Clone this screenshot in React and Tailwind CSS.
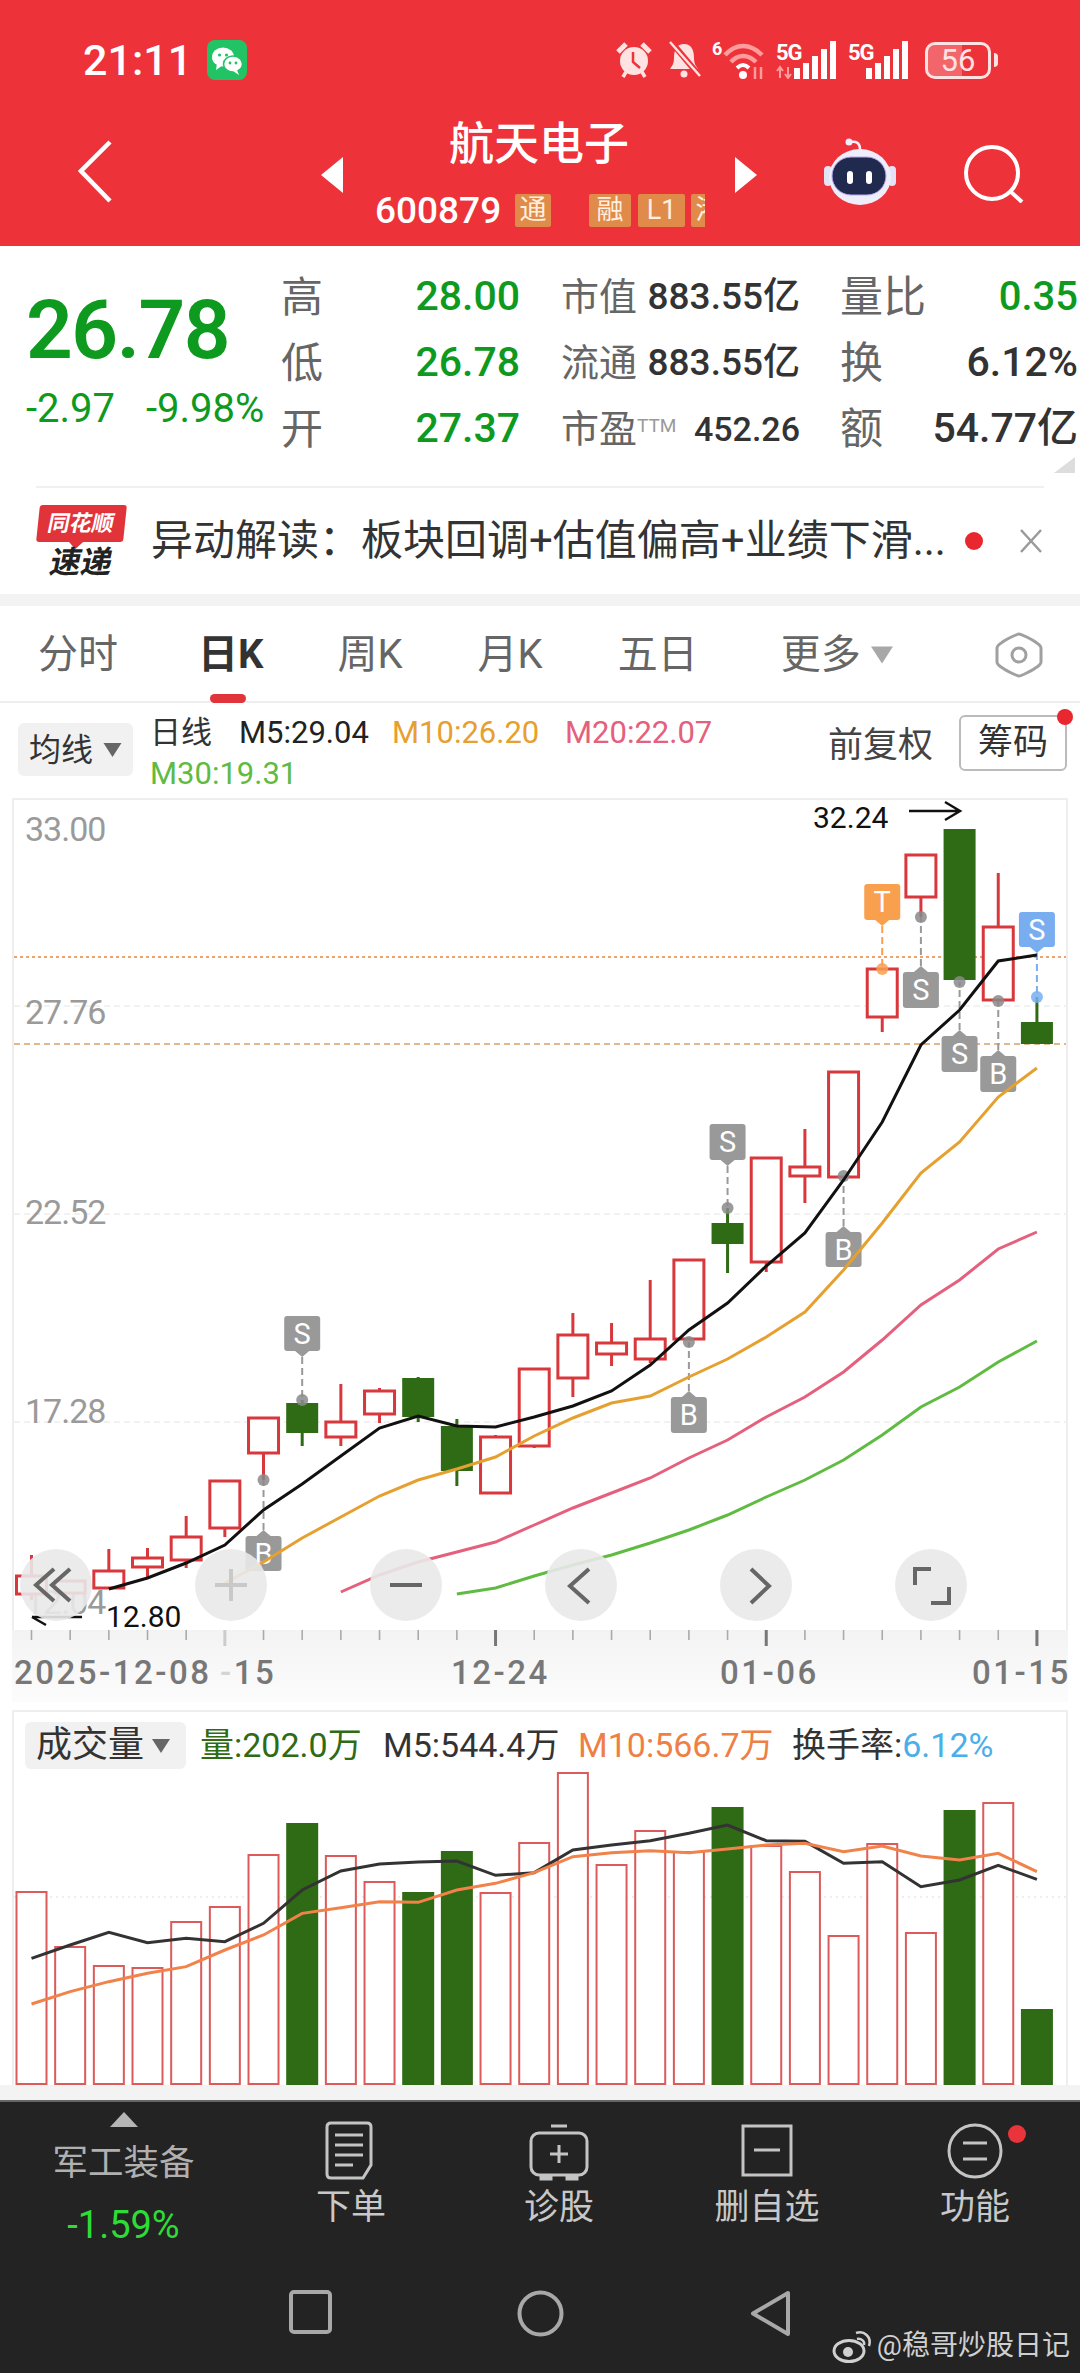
import React from "react";

const RED = "#d8383c";
const GREEN = "#2f6a14";
const cx = (i) => 31.5 + i * 38.67;

// price panel, y values are page pixels
const candles = [
  [1576, 1594, 1555, 1600, 0],
  [1581, 1593, 1581, 1593, 0],
  [1571, 1588, 1549, 1588, 0],
  [1558, 1567, 1548, 1577, 0],
  [1537, 1560, 1516, 1568, 0],
  [1481, 1528, 1481, 1537, 0],
  [1418, 1453, 1418, 1480, 0],
  [1403, 1433, 1400, 1446, 1],
  [1422, 1437, 1384, 1446, 0],
  [1391, 1414, 1388, 1423, 0],
  [1378, 1417, 1377, 1422, 1],
  [1426, 1471, 1419, 1486, 1],
  [1437, 1493, 1435, 1493, 0],
  [1369, 1446, 1369, 1448, 0],
  [1335, 1378, 1313, 1397, 0],
  [1343, 1354, 1323, 1366, 0],
  [1339, 1359, 1280, 1363, 0],
  [1260, 1339, 1260, 1339, 0],
  [1223, 1244, 1208, 1273, 1],
  [1158, 1262, 1158, 1272, 0],
  [1167, 1176, 1129, 1203, 0],
  [1072, 1177, 1072, 1177, 0],
  [969, 1017, 969, 1032, 0],
  [855, 897, 855, 917, 0],
  [829, 980, 829, 980, 1],
  [927, 1000, 873, 1000, 0],
  [1022, 1044, 997, 1044, 1],
];

const ma5 = [1589, 1578, 1563, 1545, 1510, 1484, 1456, 1428, 1416, 1426, 1427, 1417, 1406, 1391, 1365, 1330, 1303, 1266, 1233, 1180, 1122, 1045, 1010, 961, 955];
const ma10 = [1583, 1562, 1538, 1517, 1496, 1480, 1469, 1457, 1436, 1418, 1403, 1396, 1377, 1359, 1337, 1312, 1270, 1223, 1173, 1142, 1097, 1068];
const ma20 = [1592, 1575, 1562, 1552, 1542, 1525, 1508, 1493, 1478, 1458, 1440, 1417, 1397, 1372, 1340, 1305, 1280, 1249, 1232];
const ma30 = [1594, 1588, 1576, 1565, 1555, 1543, 1530, 1515, 1497, 1480, 1460, 1435, 1407, 1387, 1362, 1341];

const tags = [
  { i: 7, top: 1316, bottom: 1351, dot: 1400, label: "S", up: true, color: "#999999" },
  { i: 6, top: 1536, bottom: 1571, dot: 1480, label: "B", color: "#999999" },
  { i: 18, top: 1124, bottom: 1160, dot: 1208, label: "S", up: true, color: "#999999" },
  { i: 21, top: 1232, bottom: 1267, dot: 1176, label: "B", color: "#999999" },
  { i: 17, top: 1397, bottom: 1433, dot: 1342, label: "B", color: "#999999" },
  { i: 22, top: 884, bottom: 920, dot: 969, label: "T", up: true, color: "#f9a04f" },
  { i: 23, top: 972, bottom: 1008, dot: 917, label: "S", color: "#999999" },
  { i: 24, top: 1036, bottom: 1072, dot: 982, label: "S", color: "#999999" },
  { i: 25, top: 1056, bottom: 1092, dot: 1001, label: "B", color: "#999999" },
  { i: 26, top: 912, bottom: 947, dot: 997, label: "S", up: true, color: "#78aef0" },
];

const priceLabels = [
  ["33.00", 829],
  ["27.76", 1012],
  ["22.52", 1212],
  ["17.28", 1411],
];

// volume panel, tops in page pixels
const bars = [
  [1892, 0], [1947, 0], [1966, 0], [1968, 0], [1922, 0], [1907, 0], [1855, 0], [1823, 1], [1856, 0],
  [1882, 0], [1892, 1], [1851, 1], [1893, 0], [1843, 0], [1773, 0], [1865, 0], [1831, 0], [1852, 0],
  [1807, 1], [1846, 0], [1872, 0], [1936, 0], [1844, 0], [1933, 0], [1810, 1], [1803, 0], [2009, 1],
];
const volMa5 = [835, 795, 757, 788, 775, 785, 730, 630, 573, 552, 546, 543, 586, 578, 510, 495, 482, 460, 435, 482, 484, 550, 545, 620, 600, 556, 598];
const volMa10 = [972, 935, 905, 880, 860, 810, 765, 700, 683, 665, 667, 630, 610, 578, 530, 518, 512, 518, 507, 495, 490, 515, 498, 528, 540, 520, 575];

const pts = (arr, start) => arr.map((y, k) => `${cx(start + k)},${y}`).join(" ");
const volPts = (arr) => arr.map((z, k) => `${cx(k)},${1680 + z / 3}`).join(" ");

function Tag({ i, top, bottom, dot, label, up, color }) {
  const x = cx(i);
  const tip = up ? bottom + 6 : top - 6;
  const notch = up ? bottom : top;
  return (
    <g>
      <line x1={x} x2={x} y1={tip} y2={dot} stroke={color} strokeWidth="2" strokeDasharray="7 4" />
      <circle cx={x} cy={dot} r="6" fill={color === "#999999" ? "#8a8a8a" : color} opacity="0.85" />
      <rect x={x - 18} y={top} width="36" height={bottom - top} rx="3" fill={color} />
      <polygon points={`${x - 7},${notch} ${x + 7},${notch} ${x},${tip}`} fill={color} />
      <text x={x} y={(top + bottom) / 2 + 10} textAnchor="middle" fontSize="29" fill="#fff">
        {label}
      </text>
    </g>
  );
}

function PriceChart() {
  return (
    <div className="relative ml-[12px] h-[832px] w-[1056px] border-x-2 border-t-2 border-[#eeeeee]">
      <svg viewBox="14 800 1052 830" className="block h-[830px] w-[1052px]">
        {[1006, 1214, 1422].map((y) => (
          <line key={y} x1="14" x2="1066" y1={y} y2={y} stroke="#e4e4e4" strokeWidth="1" strokeDasharray="6 4" />
        ))}
        <line x1="14" x2="1066" y1="957" y2="957" stroke="#e8853f" strokeWidth="1.6" strokeDasharray="3 3" />
        <line x1="14" x2="1066" y1="1044" y2="1044" stroke="#d9a067" strokeWidth="1.6" strokeDasharray="6 4" />
        {priceLabels.map(([t, y]) => (
          <text key={t} x="25" y={y + 12} fontSize="34" letterSpacing="-1" fill="#9a9a9a">
            {t}
          </text>
        ))}
        <text x="25" y="1614" fontSize="34" letterSpacing="-1" fill="#9a9a9a">12.04</text>
        {candles.map(([t, b, hi, lo, down], i) => {
          const x = cx(i);
          const c = down ? GREEN : RED;
          return (
            <g key={i}>
              <line x1={x} x2={x} y1={hi} y2={t} stroke={c} strokeWidth="3" />
              <line x1={x} x2={x} y1={b} y2={lo} stroke={c} strokeWidth="3" />
              {down ? (
                <rect x={x - 16} y={t} width="32" height={b - t} fill={c} />
              ) : (
                <rect x={x - 15} y={t} width="30" height={b - t} fill="#fff" stroke={c} strokeWidth="3" />
              )}
            </g>
          );
        })}
        {tags.map((t) => (
          <Tag key={t.i} {...t} />
        ))}
        <polyline points={pts(ma30, 11)} fill="none" stroke="#5fbb42" strokeWidth="3" />
        <polyline points={pts(ma20, 8)} fill="none" stroke="#e4607c" strokeWidth="3" />
        <polyline points={pts(ma10, 5)} fill="none" stroke="#e6a030" strokeWidth="3" />
        <polyline points={pts(ma5, 2)} fill="none" stroke="#111111" strokeWidth="3" />
        <text x="813" y="828" fontSize="30" fill="#111">32.24</text>
        <path d="M909 811H959M945 802L960 811L945 820" fill="none" stroke="#111" strokeWidth="2.5" />
        <text x="106" y="1627" fontSize="30" fill="#111">12.80</text>
        <path d="M82 1617H32M46 1625L32 1617" fill="none" stroke="#111" strokeWidth="2.5" />
      </svg>

      <div className="absolute left-[6px] top-[749px] flex gap-[103px]">
        <RoundButton>
          <path d="M34 20L16 36L34 52M50 20L32 36L50 52" stroke="#666" strokeWidth="4" fill="none" />
        </RoundButton>
        <RoundButton>
          <path d="M36 20V52M20 36H52" stroke="#c9c9c9" strokeWidth="4" fill="none" />
        </RoundButton>
        <RoundButton>
          <path d="M20 36H52" stroke="#666" strokeWidth="4" fill="none" />
        </RoundButton>
        <RoundButton>
          <path d="M44 20L25 37L44 54" stroke="#666" strokeWidth="4" fill="none" />
        </RoundButton>
        <RoundButton>
          <path d="M31 20L49 37L31 54" stroke="#666" strokeWidth="4" fill="none" />
        </RoundButton>
        <RoundButton>
          <path d="M36 20H20V36M36 54H54V38" stroke="#666" strokeWidth="4" fill="none" />
        </RoundButton>
      </div>
    </div>
  );
}

function RoundButton({ children }) {
  return (
    <div className="h-[72px] w-[72px] rounded-full bg-[#e9e9e9]/90">
      <svg viewBox="0 0 72 72" className="h-[72px] w-[72px]">
        {children}
      </svg>
    </div>
  );
}

function DateAxis() {
  return (
    <div className="ml-[12px] h-[72px] w-[1056px] bg-linear-to-b from-[#f3f3f3] to-[#fcfcfc]">
      <svg viewBox="12 1630 1056 72" className="block h-[72px] w-[1056px]">
        {candles.map((_, i) => {
          const major = i === 5 || i === 12 || i === 19 || i === 26;
          return (
            <line
              key={i}
              x1={cx(i)}
              x2={cx(i)}
              y1="1630"
              y2={major ? 1646 : 1640}
              stroke={i === 5 ? "#cccccc" : major ? "#777777" : "#aaaaaa"}
              strokeWidth={major ? 3 : 1.6}
            />
          );
        })}
        <g fontSize="33" fill="#777777" letterSpacing="2.5" fontWeight="500">
          <text x="14" y="1684">2025-12-08</text>
          <text x="220" y="1684">
            <tspan fill="#d4d4d4">-</tspan>15
          </text>
          <text x="451" y="1684">12-24</text>
          <text x="720" y="1684">01-06</text>
          <text x="972" y="1684">01-15</text>
        </g>
      </svg>
    </div>
  );
}

function VolumePanel() {
  return (
    <div className="ml-[12px] mt-[8px] h-[375px] w-[1056px] border-x-2 border-t-2 border-[#eeeeee]">
      <div className="flex h-[60px] items-start pl-[11px] pt-[10px] text-[34px] leading-[47px]">
        <div className="flex h-[47px] w-[161px] items-center rounded-md bg-[#f1f1f1] pl-[11px] text-[#333]">
          <span className="text-[36px]">成交量</span>
          <Caret className="ml-[8px] h-[14px] w-[18px]" fill="#666" />
        </div>
        <span className="ml-[14px] w-[183px] text-[#2f6a14]">量:202.0万</span>
        <span className="w-[195px] text-[#333]">M5:544.4万</span>
        <span className="w-[214px] text-[#ee7f45]">M10:566.7万</span>
        <span className="text-[#333]">换手率:</span>
        <span className="text-[#4aaee8]">6.12%</span>
      </div>
      <svg viewBox="14 1772 1052 313" className="block h-[313px] w-[1052px]">
        <line x1="14" x2="1066" y1="1897" y2="1897" stroke="#dddddd" strokeWidth="1" strokeDasharray="2 4" />
        {bars.map(([top, down], i) =>
          down ? (
            <rect key={i} x={cx(i) - 16} y={top} width="32" height={2085 - top} fill={GREEN} />
          ) : (
            <rect key={i} x={cx(i) - 15} y={top} width="30" height={2084 - top} fill="#fff" stroke="#dc5a5a" strokeWidth="2" />
          ),
        )}
        <polyline points={volPts(volMa5)} fill="none" stroke="#333333" strokeWidth="3" />
        <polyline points={volPts(volMa10)} fill="none" stroke="#f0824a" strokeWidth="3" />
      </svg>
    </div>
  );
}

function Caret({ className, fill }) {
  return (
    <svg viewBox="0 0 18 14" className={className}>
      <polygon points="0,0 18,0 9,14" fill={fill} />
    </svg>
  );
}

function Signal({ arrows }) {
  return (
    <svg viewBox="0 0 61 38" className="h-[38px] w-[61px]" fill="#fff">
      <text x="0" y="19" fontSize="22" fontWeight="700" letterSpacing="-1">5G</text>
      {arrows && (
        <path d="M4 26V37M1 30L4 26L7 30M12 26V37M9 33L12 37L15 33" stroke="#ff9c9c" strokeWidth="2" fill="none" />
      )}
      <rect x="18" y="27" width="6" height="11" />
      <rect x="27" y="22" width="6" height="16" />
      <rect x="36" y="15" width="6" height="23" />
      <rect x="45" y="8" width="6" height="30" />
      <rect x="54" y="0" width="6" height="38" />
    </svg>
  );
}

function StatusBar() {
  return (
    <div className="flex h-[120px] items-center justify-between pl-[83px] pr-[82px]">
      <div className="flex items-center">
        <span className="w-[124px] text-[43px] font-medium leading-none">21:11</span>
        <div className="h-[40px] w-[40px] rounded-lg bg-[#22c365]">
          <svg viewBox="0 0 40 40" className="h-[40px] w-[40px]">
            <ellipse cx="16" cy="17" rx="11" ry="9.5" fill="#fff" />
            <polygon points="10,23 9,30 16,25" fill="#fff" />
            <ellipse cx="26" cy="24" rx="9.5" ry="8" fill="#fff" stroke="#22c365" strokeWidth="1.5" />
            <polygon points="30,30 32,35 26,31" fill="#fff" />
            <circle cx="12.5" cy="15" r="1.6" fill="#22c365" />
            <circle cx="19.5" cy="15" r="1.6" fill="#22c365" />
            <circle cx="23" cy="23" r="1.4" fill="#22c365" />
            <circle cx="29" cy="23" r="1.4" fill="#22c365" />
          </svg>
        </div>
      </div>
      <div className="flex items-center">
        <svg viewBox="0 0 36 38" className="h-[38px] w-[36px]">
          <circle cx="18" cy="20" r="14" fill="#ffe3e3" />
          <path d="M17 11V21L24 27" stroke="#ee3239" strokeWidth="2.5" fill="none" />
          <path d="M2 11L10 3M34 11L26 3" stroke="#ffe3e3" strokeWidth="5" />
          <path d="M7 36L10 31M29 36L26 31" stroke="#ffe3e3" strokeWidth="3.5" />
        </svg>
        <svg viewBox="0 0 35 38" className="ml-[15px] h-[38px] w-[35px]">
          <path d="M17 3C9 3 7 10 7 17C7 23 5 25 3 28H31C29 25 27 23 27 17C27 10 25 3 17 3Z" fill="#ffe3e3" />
          <circle cx="17" cy="33" r="3.5" fill="#ffe3e3" />
          <path d="M5 2L31 33" stroke="#ee3239" strokeWidth="6" />
          <path d="M3 1L33 35" stroke="#ffe3e3" strokeWidth="2.5" />
        </svg>
        <svg viewBox="0 0 52 40" className="ml-[10px] h-[40px] w-[52px]">
          <text x="0" y="15" fontSize="18" fontWeight="700" fill="#fff">6</text>
          <path d="M13 15C24 3 38 3 50 15" stroke="#ff9c9c" strokeWidth="4.5" fill="none" />
          <path d="M19 22C26 14 36 14 44 22" stroke="#ff9c9c" strokeWidth="4.5" fill="none" />
          <path d="M25 28C29 24 33 24 37 28" stroke="#fff" strokeWidth="4" fill="none" />
          <circle cx="31" cy="35" r="4" fill="#fff" />
          <path d="M43 27V39M49 27V39" stroke="#ff9c9c" strokeWidth="2.5" />
        </svg>
        <div className="ml-[12px]">
          <Signal arrows />
        </div>
        <div className="ml-[11px]">
          <Signal />
        </div>
        <div className="relative ml-[16px] flex h-[37px] w-[66px] items-center justify-center overflow-hidden rounded-[10px] border-[3px] border-[#ffe3e3] text-[31px] leading-none text-[#ffe3e3]">
          <span className="absolute inset-y-0 left-0 w-[56%] bg-white/25" />
          <span className="relative">56</span>
        </div>
        <div className="ml-[3px] h-[14px] w-[4px] rounded-r bg-[#ffe3e3]" />
      </div>
    </div>
  );
}

function Badge({ className, children }) {
  return (
    <span className={`flex h-[33px] items-center justify-center rounded-[2px] bg-[#e08b4a] text-[27px] leading-none text-[#fff0e0] ${className}`}>
      {children}
    </span>
  );
}

function Header() {
  return (
    <header className="h-[246px] bg-[#ee3239] text-white">
      <StatusBar />
      <div className="flex items-start">
        <svg viewBox="0 0 34 63" className="ml-[78px] mt-[20px] h-[63px] w-[34px]">
          <path d="M32 2L3 31L32 61" stroke="#fff" strokeWidth="4.5" fill="none" />
        </svg>
        <svg viewBox="0 0 22 36" className="ml-[209px] mt-[37px] h-[36px] w-[22px]">
          <polygon points="22,0 0,18 22,36" fill="#fff" />
        </svg>
        <div className="w-[392px]">
          <div className="text-center text-[45px] font-medium leading-[50px]">航天电子</div>
          <div className="mt-[24px] flex items-center overflow-hidden pl-[32px]">
            <span className="w-[140px] text-[37px] font-medium leading-[33px]">600879</span>
            <Badge className="w-[36px]">通</Badge>
            <Badge className="ml-[38px] w-[42px]">融</Badge>
            <Badge className="ml-[7px] w-[47px]">L1</Badge>
            <div className="ml-[6px] h-[33px] w-[14px] overflow-hidden">
              <Badge className="w-[36px]">港</Badge>
            </div>
          </div>
        </div>
        <svg viewBox="0 0 22 36" className="mt-[37px] h-[36px] w-[22px]">
          <polygon points="0,0 22,18 0,36" fill="#fff" />
        </svg>
        <svg viewBox="0 0 72 68" className="ml-[67px] mt-[18px] h-[68px] w-[72px]">
          <path d="M27 4C32 3 36 5 36 11" stroke="#f2eefb" strokeWidth="2.5" fill="none" />
          <circle cx="25" cy="4" r="3.5" fill="#f2eefb" />
          <rect x="0" y="28" width="8" height="20" rx="4" fill="#e4e2f5" />
          <rect x="64" y="28" width="8" height="20" rx="4" fill="#e4e2f5" />
          <ellipse cx="36" cy="39" rx="31" ry="28" fill="#eeeefb" />
          <rect x="8" y="19" width="54" height="38" rx="19" fill="#1f2a4e" stroke="#b9a8f0" strokeWidth="1" />
          <rect x="23" y="33" width="6" height="13" rx="3" fill="#fff" />
          <rect x="42" y="33" width="6" height="13" rx="3" fill="#fff" />
        </svg>
        <svg viewBox="0 0 60 58" className="ml-[68px] mt-[25px] h-[58px] w-[60px]">
          <circle cx="28" cy="28" r="26" stroke="#fff" strokeWidth="4" fill="none" />
          <path d="M47 47L58 57" stroke="#fff" strokeWidth="4" />
        </svg>
      </div>
    </header>
  );
}

function Stat({ label, value, labelClass = "", valueClass = "text-[#0e9a1e]" }) {
  return (
    <div className="flex h-[66px] items-center justify-between">
      <span className={`text-[#666] ${labelClass}`}>{label}</span>
      <span className={`font-medium ${valueClass}`}>{value}</span>
    </div>
  );
}

function Quote() {
  const dark = "text-[37px] text-[#333]";
  return (
    <section className="flex h-[240px] bg-white">
      <div className="w-[281px] pl-[26px] text-[#0e9a1e]">
        <div className="mt-[48px] text-[82px] font-semibold leading-[72px] tracking-[-1.5px]">26.78</div>
        <div className="mt-[23px] flex text-[40px] leading-[40px]">
          <span className="w-[120px]">-2.97</span>
          <span>-9.98%</span>
        </div>
      </div>
      <div className="flex pt-[18px] text-[42px]">
        <div className="w-[239px]">
          <Stat label="高" value="28.00" valueClass="text-[#0e9a1e] text-[41px]" />
          <Stat label="低" value="26.78" valueClass="text-[#0e9a1e] text-[41px]" />
          <Stat label="开" value="27.37" valueClass="text-[#0e9a1e] text-[41px]" />
        </div>
        <div className="ml-[41px] w-[239px]">
          <Stat label="市值" labelClass="text-[38px]" value="883.55亿" valueClass={dark} />
          <Stat label="流通" labelClass="text-[38px]" value="883.55亿" valueClass={dark} />
          <div className="flex h-[66px] items-center justify-between">
            <span className="text-[38px] text-[#666]">
              市盈<sup className="text-[19px] text-[#999]">TTM</sup>
            </span>
            <span className="text-[34px] font-medium text-[#333]">452.26</span>
          </div>
        </div>
        <div className="relative ml-[40px] w-[238px]">
          <Stat label="量比" labelClass="text-[43px]" value="0.35" valueClass="text-[#0e9a1e] text-[40px]" />
          <Stat label="换" labelClass="text-[43px]" value="6.12%" valueClass="text-[#333] text-[41px]" />
          <Stat label="额" labelClass="text-[43px]" value="54.77亿" valueClass="text-[#333] text-[41px]" />
          <svg viewBox="0 0 21 16" className="absolute right-[3px] top-[193px] h-[16px] w-[21px]">
            <polygon points="21,0 21,16 0,16" fill="#dddddd" />
          </svg>
        </div>
      </div>
    </section>
  );
}

function Notice() {
  return (
    <section className="relative h-[108px] bg-white">
      <div className="mx-[36px] h-[2px] bg-[#f0f0f0]" />
      <div className="flex h-[106px] items-center">
        <div className="ml-[38px] w-[87px]">
          <div className="relative flex h-[37px] -skew-x-6 items-center justify-center rounded-[3px] bg-[#e0343a] text-[22px] font-bold leading-none text-white">
            <span className="-skew-x-6">同花顺</span>
            <span className="absolute -bottom-[5px] left-[35px] h-[10px] w-[10px] rotate-45 bg-[#e0343a]" />
          </div>
          <div className="mt-[6px] -skew-x-12 text-center text-[31px] font-bold leading-[30px] text-[#222]">速递</div>
        </div>
        <span className="ml-[26px] w-[814px] whitespace-nowrap text-[42px] leading-none text-[#333]">
          异动解读：板块回调+估值偏高+业绩下滑...
        </span>
        <span className="h-[18px] w-[18px] rounded-full bg-[#e8282e]" />
        <svg viewBox="0 0 24 24" className="ml-[36px] h-[24px] w-[24px]">
          <path d="M2 1L22 23M22 1L2 23" stroke="#9a9a9a" strokeWidth="2.5" />
        </svg>
      </div>
    </section>
  );
}

function Tabs() {
  return (
    <nav className="flex h-[97px] items-center border-b-2 border-[#eeeeee] bg-white pt-[3px] text-[40px] leading-none text-[#666]">
      <span className="ml-[38px]">分时</span>
      <span className="relative ml-[80px] font-bold text-[#333]">
        日K
        <span className="absolute -bottom-[28px] left-[12px] h-[9px] w-[36px] rounded-full bg-[#e0343a]" />
      </span>
      <span className="ml-[74px]">周K</span>
      <span className="ml-[75px]">月K</span>
      <span className="ml-[75px]">五日</span>
      <span className="ml-[83px]">更多</span>
      <Caret className="ml-[10px] h-[18px] w-[22px]" fill="#a8a8a8" />
      <svg viewBox="0 0 48 46" className="ml-auto mr-[37px] h-[46px] w-[48px]">
        <path d="M24 2C26 2 36 7 39 9C42 11 46 13 46 16V30C46 33 42 35 39 37C36 39 26 44 24 44C22 44 12 39 9 37C6 35 2 33 2 30V16C2 13 6 11 9 9C12 7 22 2 24 2Z" fill="none" stroke="#a0a0a0" strokeWidth="3" />
        <circle cx="24" cy="23" r="7" fill="none" stroke="#a0a0a0" strokeWidth="3" />
      </svg>
    </nav>
  );
}

function Legend() {
  return (
    <section className="flex h-[95px] bg-white">
      <div className="ml-[18px] mt-[20px] flex h-[53px] w-[115px] items-center rounded-md bg-[#f1f1f1] pl-[11px] text-[32px] text-[#333]">
        均线
        <Caret className="ml-[10px] h-[14px] w-[19px]" fill="#666" />
      </div>
      <div className="ml-[17px] w-[678px] pt-[9px] text-[31px] leading-[41px]">
        <div className="flex">
          <span className="w-[89px] text-[#333]">日线</span>
          <span className="w-[153px] text-[#222]">M5:29.04</span>
          <span className="w-[173px] text-[#e6a030]">M10:26.20</span>
          <span className="text-[#e4607c]">M20:22.07</span>
        </div>
        <div className="text-[#5fbb42]">M30:19.31</div>
      </div>
      <span className="mt-[19px] w-[131px] text-[35px] leading-[48px] text-[#444]">前复权</span>
      <div className="relative mt-[12px] flex h-[56px] w-[108px] items-center justify-center rounded-md border-2 border-[#bbbbbb] text-[35px] text-[#333]">
        筹码
        <span className="absolute -right-[8px] -top-[8px] h-[16px] w-[16px] rounded-full bg-[#e8282e]" />
      </div>
    </section>
  );
}

function FooterItem({ label, dot, children }) {
  return (
    <div className="relative flex flex-col items-center pt-[19px]">
      <svg viewBox="0 0 60 60" className="h-[60px] w-[60px]" fill="none" stroke="#c4c4c4" strokeWidth="3">
        {children}
      </svg>
      <span className="mt-[7px] text-[35px] leading-[40px] text-[#c8c8c8]">{label}</span>
      {dot && <span className="absolute left-[137px] top-[23px] h-[18px] w-[18px] rounded-full bg-[#e8343a]" />}
    </div>
  );
}

function Footer() {
  return (
    <footer className="relative h-[273px] border-t-2 border-[#666666] bg-[#232323]">
      <div className="grid h-[168px] grid-cols-[247px_repeat(4,208px)]">
        <div className="flex flex-col items-center pt-[10px]">
          <svg viewBox="0 0 28 15" className="h-[15px] w-[28px]">
            <polygon points="14,0 28,15 0,15" fill="#b5b5b5" />
          </svg>
          <span className="mt-[16px] text-[35.5px] leading-[40px] text-[#b0b0b0]">军工装备</span>
          <span className="mt-[21px] text-[38px] leading-[42px] text-[#2fdc36]">-1.59%</span>
        </div>
        <FooterItem label="下单">
          <path d="M10 2H46Q50 2 50 6V44L42 57H10Q6 57 6 53V6Q6 2 10 2Z" />
          <path d="M14 14H42M14 24H42M14 34H42M14 44H32" />
        </FooterItem>
        <FooterItem label="诊股">
          <rect x="2" y="12" width="56" height="42" rx="8" />
          <path d="M22 5H38M30 24V42M21 33H39" />
          <path d="M12 54V58H22V54M38 54V58H48V54" fill="#c4c4c4" />
        </FooterItem>
        <FooterItem label="删自选">
          <rect x="6" y="5" width="48" height="49" />
          <path d="M17 29H43" />
        </FooterItem>
        <FooterItem label="功能" dot>
          <circle cx="30" cy="30" r="26" />
          <path d="M18 22H42M18 38H42" />
        </FooterItem>
      </div>
      <div className="flex pt-[20px]">
        <svg viewBox="0 0 43 44" className="ml-[289px] h-[44px] w-[43px]">
          <rect x="2" y="2" width="39" height="40" rx="3" fill="none" stroke="#a8a8a8" strokeWidth="4" />
        </svg>
        <svg viewBox="0 0 47 47" className="ml-[185px] h-[47px] w-[47px]">
          <circle cx="23.5" cy="23.5" r="21" fill="none" stroke="#a8a8a8" strokeWidth="4" />
        </svg>
        <svg viewBox="0 0 41 47" className="ml-[186px] h-[47px] w-[41px]">
          <path d="M38 3V44L3 23.5Z" fill="none" stroke="#a8a8a8" strokeWidth="4" strokeLinejoin="round" />
        </svg>
      </div>
      <div className="absolute bottom-[10px] right-[10px] flex items-center text-[#d0d0d0]">
        <svg viewBox="0 0 42 34" className="h-[34px] w-[42px]">
          <ellipse cx="17" cy="22" rx="15" ry="10.5" fill="none" stroke="#d0d0d0" strokeWidth="3" />
          <circle cx="16" cy="23" r="5" fill="#d0d0d0" />
          <path d="M24 4C32 1 40 8 37 17M25 10C29 9 33 12 32 16" fill="none" stroke="#d0d0d0" strokeWidth="2.5" />
        </svg>
        <span className="ml-[3px] text-[28px] leading-none">@稳哥炒股日记</span>
      </div>
    </footer>
  );
}

export default function App() {
  return (
    <div className="h-[2373px] w-[1080px] overflow-hidden bg-white [font-family:Roboto,'Noto_Sans_CJK_SC',sans-serif]">
      <Header />
      <Quote />
      <Notice />
      <div className="h-[12px] bg-[#f3f3f3]" />
      <Tabs />
      <Legend />
      <PriceChart />
      <DateAxis />
      <VolumePanel />
      <div className="h-[15px] bg-[#f3f3f3]" />
      <Footer />
    </div>
  );
}
